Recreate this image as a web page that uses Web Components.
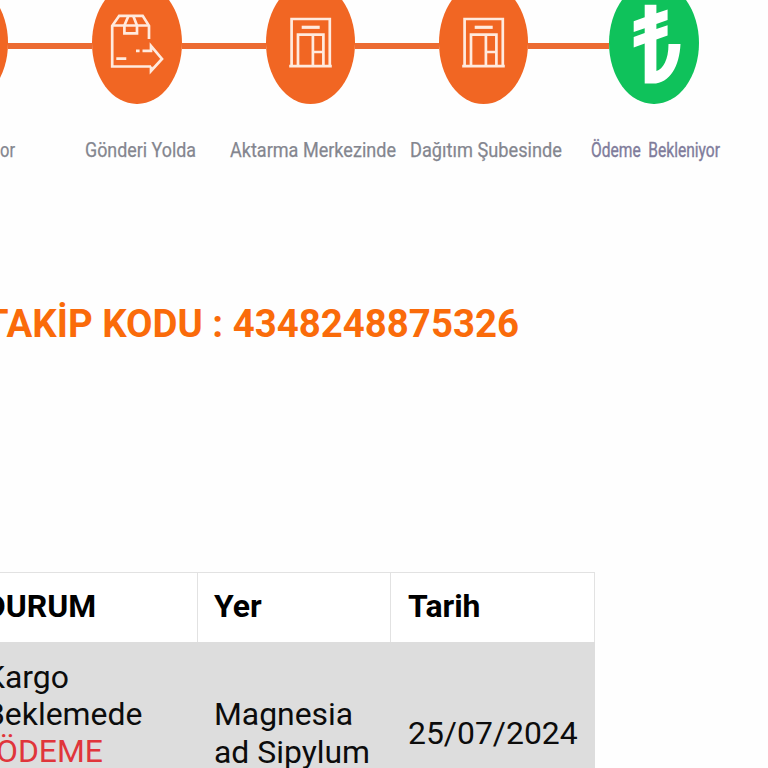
<!DOCTYPE html>
<html lang="tr">
<head>
<meta charset="utf-8">
<title>Kargo Takip</title>
<style>
html, body {
    margin: 0;
    height: 768px;
    overflow: hidden;
    background: #fefefe;
    font-family: Roboto, "Liberation Sans", sans-serif;
}
</style>
</head>
<body>
<cargo-page></cargo-page>

<script>
// strokes and fills are drawn in the 89.4 x 122 box of the badge
const icons = {
    box: `<g class="line">
        <path d="M59 84.5H20.2V43.8L27.2 33.8H50.7L57 43.8V57"/>
        <path d="M20.2 43.5H57"/>
        <path d="M36.5 33.8L32.4 43.5V51.4H45V43.5L41.2 33.8"/>
        <path d="M24.3 76.6H34.3M44 68.8H47.6M50.5 68.8H59V64L70 77L59 89V84.5"/>
    </g>`,
    branch: `<g class="line">
        <path d="M25.6 84V37H63.8V84M23.2 84.2H65.8"/>
        <path d="M35.7 45.3H53.7" stroke-width="3.2"/>
        <path d="M32 84V52.6H57.4V84M46.9 52.6V84M46.9 70H57.4"/>
    </g>`,
    lira: `<path fill="#fff" d="M35.7 22.7H47.4V31.3L58.6 27.5V38L47.4 42V47L58.6 43.2V53.6L47.4 57.5V89C54 87 59.5 78 59.5 62H71.5C70.5 84 61 101.6 44 101.6H35.7V61.5L24.7 65.4V55L35.7 51V46.3L24.7 50V39.2L35.7 35.3Z"/>`,
    none: ""
};

const stepTemplate = document.createElement("template");
stepTemplate.innerHTML = `
<style>
:host {
    display: flex;
    flex-direction: column;
    align-items: center;
    flex: none;
    width: 173.3px;
    --tone: #f16623;
}
:host([done]) {
    width: 167.6px;
    --tone: #0fc25b;
}
.row {
    display: flex;
    align-items: center;
    width: 100%;
    height: 122px;
}
.bar {
    flex: 1;
    height: 6px;
    margin-top: 6px;
    background: #ec6b32;
}
:host([done]) .bar:last-child {
    background: none;
}
.badge {
    width: 89.4px;
    height: 122px;
    border-radius: 50%;
    background: var(--tone);
}
.badge svg, .label {
    display: block;
}
.line {
    fill: none;
    stroke: #ffeade;
    stroke-width: 2.7;
}
.label {
    margin-top: 29px;
    overflow: visible;
    fill: #84868f;
    stroke: #84868f;
    stroke-width: .25px;
    font-size: 21px;
}
.label text {
    white-space: pre;
}
:host([done]) .label {
    fill: #7f7c9b;
    stroke: #7f7c9b;
    stroke-width: .4px;
}
</style>
<div class="row">
    <div class="bar"></div>
    <div class="badge"><svg width="89.4" height="122" viewBox="0 0 89.4 122"></svg></div>
    <div class="bar"></div>
</div>
<svg class="label" height="30"><text y="23.5" lengthAdjust="spacingAndGlyphs"></text></svg>
`;

class CargoStep extends HTMLElement {
    constructor() {
        super();
        this.attachShadow({ mode: "open" });
    }

    connectedCallback() {
        this.shadowRoot.appendChild(stepTemplate.content.cloneNode(true));
        this.shadowRoot.querySelector(".badge svg").innerHTML = icons[this.getAttribute("icon")];
        // the label is condensed to the width given on the element
        const width = this.getAttribute("label-width");
        const label = this.shadowRoot.querySelector(".label");
        const text = label.querySelector("text");
        label.setAttribute("width", width);
        label.style.marginLeft = this.getAttribute("shift") + "px";
        text.setAttribute("textLength", width);
        text.textContent = this.getAttribute("label");
    }
}
customElements.define("cargo-step", CargoStep);

class CargoSteps extends HTMLElement {
    constructor() {
        super();
        this.attachShadow({ mode: "open" }).innerHTML = `
<style>
:host {
    display: flex;
    height: 208px;
    margin: -18px 0 0 -123px;
}
</style>
<slot></slot>`;
    }
}
customElements.define("cargo-steps", CargoSteps);

class TrackingCode extends HTMLElement {
    constructor() {
        super();
        this.attachShadow({ mode: "open" }).innerHTML = `
<style>
:host {
    display: flex;
    justify-content: flex-end;
    width: 519px;
    margin-top: 111px;
    height: 46px;
    line-height: 46px;
    font-size: 38.4px;
    font-weight: 700;
    white-space: pre;
    color: #fa6b0a;
}
</style>
<slot></slot>`;
    }
}
customElements.define("tracking-code", TrackingCode);

class StatusCell extends HTMLElement {
    constructor() {
        super();
        this.attachShadow({ mode: "open" }).innerHTML = `
<style>
:host {
    display: flex;
    align-items: center;
    box-sizing: border-box;
    padding: 0 16px;
    white-space: nowrap;
    color: #0c0c0c;
    background: #ddd;
}
:host([head]) {
    padding-bottom: 2px;
    font-weight: 700;
    color: #000;
    background: #fff;
    border-top: 1px solid #e2e2e2;
    border-right: 1px solid #e2e2e2;
}
:host([top]) {
    align-items: flex-start;
    padding-top: 16.5px;
}
:host([last]) {
    padding-left: 17px;
}
::slotted(div) {
    flex: none;
}
</style>
<slot></slot>`;
    }
}
customElements.define("status-cell", StatusCell);

class StatusTable extends HTMLElement {
    constructor() {
        super();
        this.attachShadow({ mode: "open" }).innerHTML = `
<style>
:host {
    display: grid;
    grid-template-columns: 229px 193px 204px;
    grid-template-rows: 70px 183px;
    width: 626px;
    margin: 225px 0 0 -31px;
    font-size: 31.9px;
    line-height: 37.33px;
}
</style>
<slot></slot>`;
    }
}
customElements.define("status-table", StatusTable);

class CargoPage extends HTMLElement {
    constructor() {
        super();
        this.attachShadow({ mode: "open" }).innerHTML = `
<style>
:host {
    display: flow-root;
    height: 768px;
    overflow: hidden;
}
.due {
    color: #e0353b;
    padding-left: 11px;
}
</style>
<cargo-steps>
    <cargo-step icon="none" label="or" label-width="15" shift="87"></cargo-step>
    <cargo-step icon="box" label="Gönderi Yolda" label-width="111" shift="7"></cargo-step>
    <cargo-step icon="branch" label="Aktarma Merkezinde" label-width="166" shift="6"></cargo-step>
    <cargo-step icon="branch" label="Dağıtım Şubesinde" label-width="152" shift="5"></cargo-step>
    <cargo-step done icon="lira" label="Ödeme  Bekleniyor" label-width="129" shift="3"></cargo-step>
</cargo-steps>
<tracking-code>TAKİP KODU : 4348248875326</tracking-code>
<status-table>
    <status-cell head>DURUM</status-cell>
    <status-cell head>Yer</status-cell>
    <status-cell head last>Tarih</status-cell>
    <status-cell top><div>Kargo<br>Beklemede<br><span class="due">ÖDEME</span></div></status-cell>
    <status-cell><div>Magnesia<br>ad Sipylum</div></status-cell>
    <status-cell last>25/07/2024</status-cell>
</status-table>`;
    }
}
customElements.define("cargo-page", CargoPage);
</script>
</body>
</html>
